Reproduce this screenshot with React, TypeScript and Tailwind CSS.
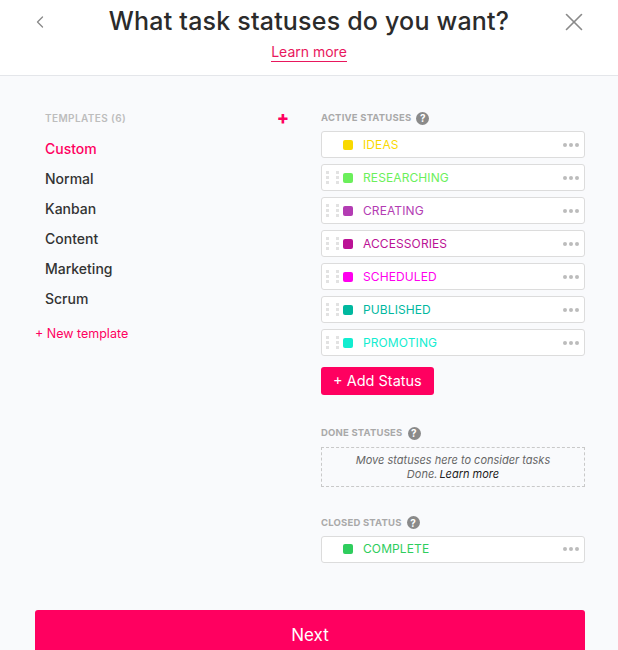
import { ChevronLeft, X } from "lucide-react";

interface Status {
  name: string;
  color: string;
  draggable: boolean;
}

const active: Status[] = [
  { name: "IDEAS", color: "#f9d900", draggable: false },
  { name: "RESEARCHING", color: "#6bef5b", draggable: true },
  { name: "CREATING", color: "#b33cb3", draggable: true },
  { name: "ACCESSORIES", color: "#bb1295", draggable: true },
  { name: "SCHEDULED", color: "#ff00ee", draggable: true },
  { name: "PUBLISHED", color: "#00b89f", draggable: true },
  { name: "PROMOTING", color: "#12edd0", draggable: true },
];

const templates = ["Custom", "Normal", "Kanban", "Content", "Marketing", "Scrum"];

const Help = () => (
  <span className="ml-[5px] inline-flex h-[13px] w-[13px] items-center justify-center rounded-full bg-[#8a8a8a] text-[10px] font-bold leading-none text-white">
    ?
  </span>
);

const Handle = () => (
  <div className="grid grid-cols-2 gap-x-[2px] gap-y-[2px]">
    {[0, 1, 2, 3, 4, 5].map((i) => (
      <span key={i} className="h-[3px] w-[3px] bg-[#e2e2e2]" />
    ))}
  </div>
);

const Row = ({ s }: { s: Status }) => (
  <div className="flex h-[27px] items-center rounded-[3px] border border-[#dcdcdc] bg-white pl-[4px] pr-[5px]">
    <div className="w-[17px]">{s.draggable && <Handle />}</div>
    <span className="h-[10px] w-[10px] rounded-[2px]" style={{ backgroundColor: s.color }} />
    <span className="ml-[10px] flex-1 text-[12px] tracking-[0.1px]" style={{ color: s.color }}>
      {s.name}
    </span>
    <span className="flex gap-[2px]">
      <span className="h-[4px] w-[4px] rounded-full bg-[#bcbcbc]" />
      <span className="h-[4px] w-[4px] rounded-full bg-[#bcbcbc]" />
      <span className="h-[4px] w-[4px] rounded-full bg-[#bcbcbc]" />
    </span>
  </div>
);

const Label = ({ children }: { children: string }) => (
  <div className="flex items-center text-[9.5px] font-bold tracking-[0.2px] text-[#a9a9a9]">
    {children}
    <Help />
  </div>
);

export default function App() {
  return (
    <div className="flex h-[650px] w-full flex-col overflow-hidden bg-[#f9fafc] font-['Inter',sans-serif]">
      <header className="flex h-[76px] shrink-0 border-b border-[#e4e6ea] bg-white">
        <div className="flex w-[78px] justify-center pt-[12px] pl-[2px]">
          <ChevronLeft size={20} strokeWidth={1.6} className="text-[#8a8a8a]" />
        </div>
        <div className="flex flex-1 flex-col items-center pt-[3px]">
          <h1 className="text-[25px] font-medium leading-[36px] tracking-[0.2px] text-[#2b2b2b]">What task statuses do you want?</h1>
          <a className="mt-[4px] border-b-[1.5px] border-[#e8175d] text-[14px] leading-[18px] text-[#e8175d]">Learn more</a>
        </div>
        <div className="flex w-[78px] justify-center pt-[7px] pr-[10px]">
          <X size={30} strokeWidth={1.3} className="text-[#8a8a8a]" />
        </div>
      </header>

      <div className="flex flex-1 gap-[31px] pl-[35px] pr-[33px] pt-[35px]">
        <aside className="w-[255px] shrink-0">
          <div className="-mt-[2px] flex items-center justify-between pl-[10px] pr-[1px]">
            <span className="text-[10px] font-semibold tracking-[0.4px] text-[#bdbdbd]">TEMPLATES (6)</span>
            <span className="text-[18px] font-extrabold leading-none text-[#ff0060]">+</span>
          </div>
          <ul className="mt-[7px] pl-[10px]">
            {templates.map((t, i) => (
              <li
                key={t}
                className={`h-[30px] text-[14px] font-medium leading-[30px] ${i === 0 ? "text-[#ff0060]" : "text-[#333]"}`}
              >
                {t}
              </li>
            ))}
          </ul>
          <div className="mt-[11px] text-[12.5px] text-[#ff0060]">+ New template</div>
        </aside>

        <section className="flex-1">
          <Label>ACTIVE STATUSES</Label>
          <div className="mt-[6px] flex flex-col gap-[6px]">
            {active.map((s) => (
              <Row key={s.name} s={s} />
            ))}
          </div>
          <button className="mt-[11px] h-[28px] rounded-[3px] bg-[#ff0060] px-[12px] text-[14.5px] text-white">
            + Add Status
          </button>

          <div className="mt-[31px]">
            <Label>DONE STATUSES</Label>
          </div>
          <div className="mt-[6px] flex h-[40px] flex-col items-center justify-center border border-dashed border-[#c9c9c9] text-[11px] italic leading-[14px] text-[#666]">
            <span>Move statuses here to consider tasks</span>
            <span className="flex gap-[2px]">
              <span>Done.</span>
              <span className="text-[#222]">Learn more</span>
            </span>
          </div>

          <div className="mt-[29px]">
            <Label>CLOSED STATUS</Label>
          </div>
          <div className="mt-[6px]">
            <Row s={{ name: "COMPLETE", color: "#2ecd5d", draggable: false }} />
          </div>
        </section>
      </div>

      <div className="px-[33px] pl-[35px]">
        <button className="h-[40px] w-full rounded-t-[3px] bg-[#ff0060] pt-[12px] text-[17px] text-white">Next</button>
      </div>
    </div>
  );
}
